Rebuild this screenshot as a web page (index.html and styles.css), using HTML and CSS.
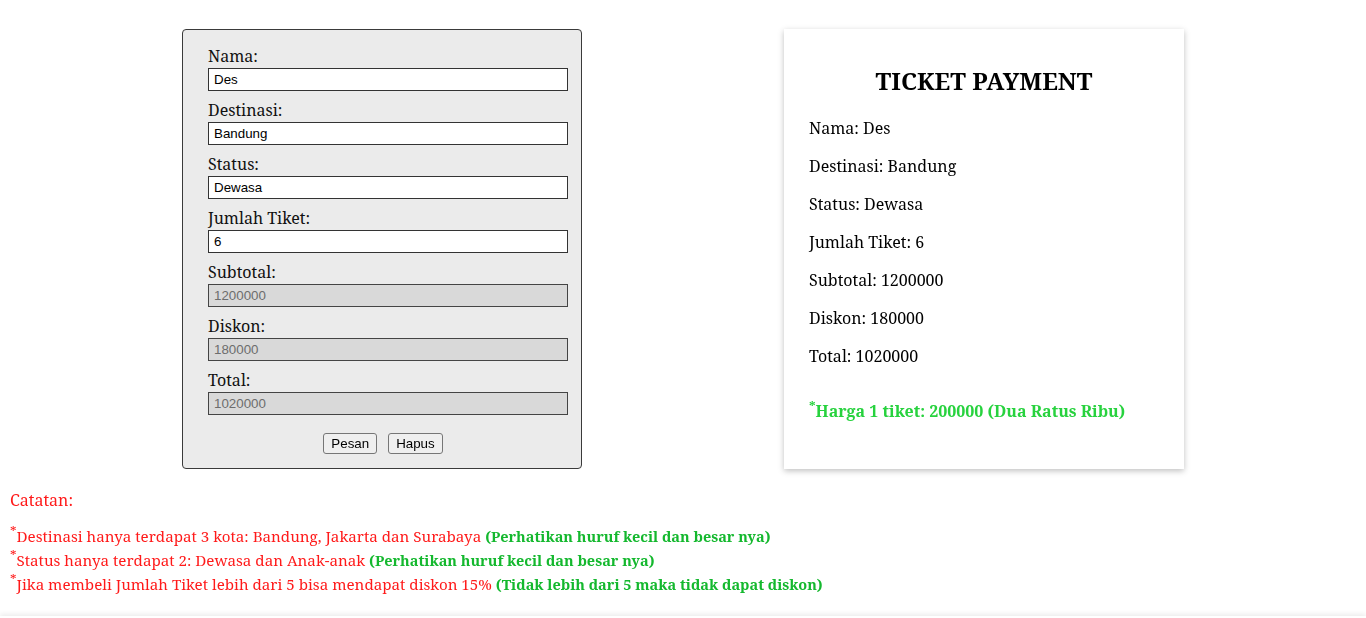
FILE: index.html
```html
<!DOCTYPE html>
<html lang="id">
<head>
<meta charset="utf-8">
<title>Ticket Payment</title>
<link rel="stylesheet" href="styles.css">
</head>
<body>
<div class="wrap">
  <form class="order-form">
    <label class="field-label">Nama:</label>
    <input class="field" type="text" value="Des">
    <label class="field-label">Destinasi:</label>
    <input class="field" type="text" value="Bandung">
    <label class="field-label">Status:</label>
    <input class="field" type="text" value="Dewasa">
    <label class="field-label">Jumlah Tiket:</label>
    <input class="field field-active" id="jumlah" type="text" value="6">
    <label class="field-label">Subtotal:</label>
    <input class="field" type="text" value="1200000" disabled>
    <label class="field-label">Diskon:</label>
    <input class="field" type="text" value="180000" disabled>
    <label class="field-label">Total:</label>
    <input class="field" type="text" value="1020000" disabled>
    <div class="actions">
      <button type="button" class="btn">Pesan</button>
      <button type="button" class="btn">Hapus</button>
    </div>
  </form>
  <div class="card">
    <h2 class="card-title">TICKET PAYMENT</h2>
    <p class="row">Nama: Des</p>
    <p class="row">Destinasi: Bandung</p>
    <p class="row">Status: Dewasa</p>
    <p class="row">Jumlah Tiket: 6</p>
    <p class="row">Subtotal: 1200000</p>
    <p class="row">Diskon: 180000</p>
    <p class="row">Total: 1020000</p>
    <p class="price"><sup>*</sup>Harga 1 tiket: 200000 (Dua Ratus Ribu)</p>
  </div>
</div>
<div class="notes">
  <p class="notes-title">Catatan:</p>
  <p class="notes-list">
    <sup>*</sup>Destinasi hanya terdapat 3 kota: Bandung, Jakarta dan Surabaya <b class="hint">(Perhatikan huruf kecil dan besar nya)</b><br>
    <sup>*</sup>Status hanya terdapat 2: Dewasa dan Anak-anak <b class="hint">(Perhatikan huruf kecil dan besar nya)</b><br>
    <sup>*</sup>Jika membeli Jumlah Tiket lebih dari 5 bisa mendapat diskon 15% <b class="hint">(Tidak lebih dari 5 maka tidak dapat diskon)</b>
  </p>
</div>
<div class="page-end"></div>
<script src="script.js"></script>
</body>
</html>
```
FILE: styles.css
```css
html, body {
  margin: 0;
  padding: 0;
  background: #ffffff;
}
body {
  font-family: "Noto Serif", "DejaVu Serif", serif;
  font-size: 16px;
  color: #000;
  overflow: hidden;
}
.wrap {
  display: flex;
  justify-content: center;
  gap: 202px;
  padding-top: 29px;
}
.order-form {
  width: 400px;
  box-sizing: border-box;
  background: #ebebeb;
  border: 1px solid #3a3a3a;
  border-radius: 4px;
  padding: 16px 12px 14px 25px;
  display: flex;
  flex-direction: column;
  align-items: flex-start;
}
.field-label {
  display: block;
  line-height: 20px;
  margin-bottom: 2px;
  color: #111;
}
.field {
  width: 360px;
  height: 23px;
  box-sizing: border-box;
  margin: 0 0 9px 0;
  padding: 2px 5px;
  border: 1px solid #333;
  border-radius: 0;
  background: #fff;
  font-family: "Liberation Sans", Arial, sans-serif;
  font-size: 13.33px;
  color: #000;
  outline: none;
}
.field:focus {
  outline: none;
}
.field:disabled {
  background: #d9d9d9;
  color: #6d6d6d;
  border-color: #444;
}
.field-active {
  caret-color: #000;
}
.actions {
  align-self: stretch;
  display: flex;
  justify-content: center;
  gap: 11px;
  margin-top: 9px;
  padding-right: 11px;
}
.btn {
  font-family: "Liberation Sans", Arial, sans-serif;
  font-size: 13.33px;
  padding: 1px 7px;
  height: 21px;
  border: 1px solid #767676;
  border-radius: 3px;
  background: #efefef;
  color: #000;
}
.card {
  width: 400px;
  box-sizing: border-box;
  background: #fff;
  padding: 15px 25px 0 25px;
  box-shadow: 0 2px 6px rgba(0, 0, 0, 0.25);
}
.card-title {
  text-align: center;
  font-size: 24px;
  font-weight: bold;
  margin: 20px 0 20px 0;
  line-height: 33px;
}
.row {
  margin: 16px 0;
  line-height: 22px;
}
.price {
  margin: 33px 0 16px 0;
  font-weight: bold;
  color: #27d23e;
  line-height: 22px;
}
.price sup {
  font-size: 13px;
  line-height: 0;
}
.notes {
  padding: 0 10px;
  color: #ff1a1a;
  margin-top: 20px;
}
.notes-title {
  margin: 0 0 13px 0;
  line-height: 22px;
}
.notes-list {
  margin: 0;
  font-size: 15.16px;
  line-height: 24px;
}
.notes-list sup {
  font-size: 13px;
  line-height: 0;
}
.hint {
  color: #14b82e;
  font-weight: bold;
  font-size: 14.5px;
}
.page-end {
  height: 20px;
  margin-top: 20px;
  box-shadow: 0 -2px 5px rgba(0, 0, 0, 0.08);
}
```
FILE: script.js
```js
var el = document.getElementById('jumlah');
el.focus();
el.setSelectionRange(1, 1);
```
